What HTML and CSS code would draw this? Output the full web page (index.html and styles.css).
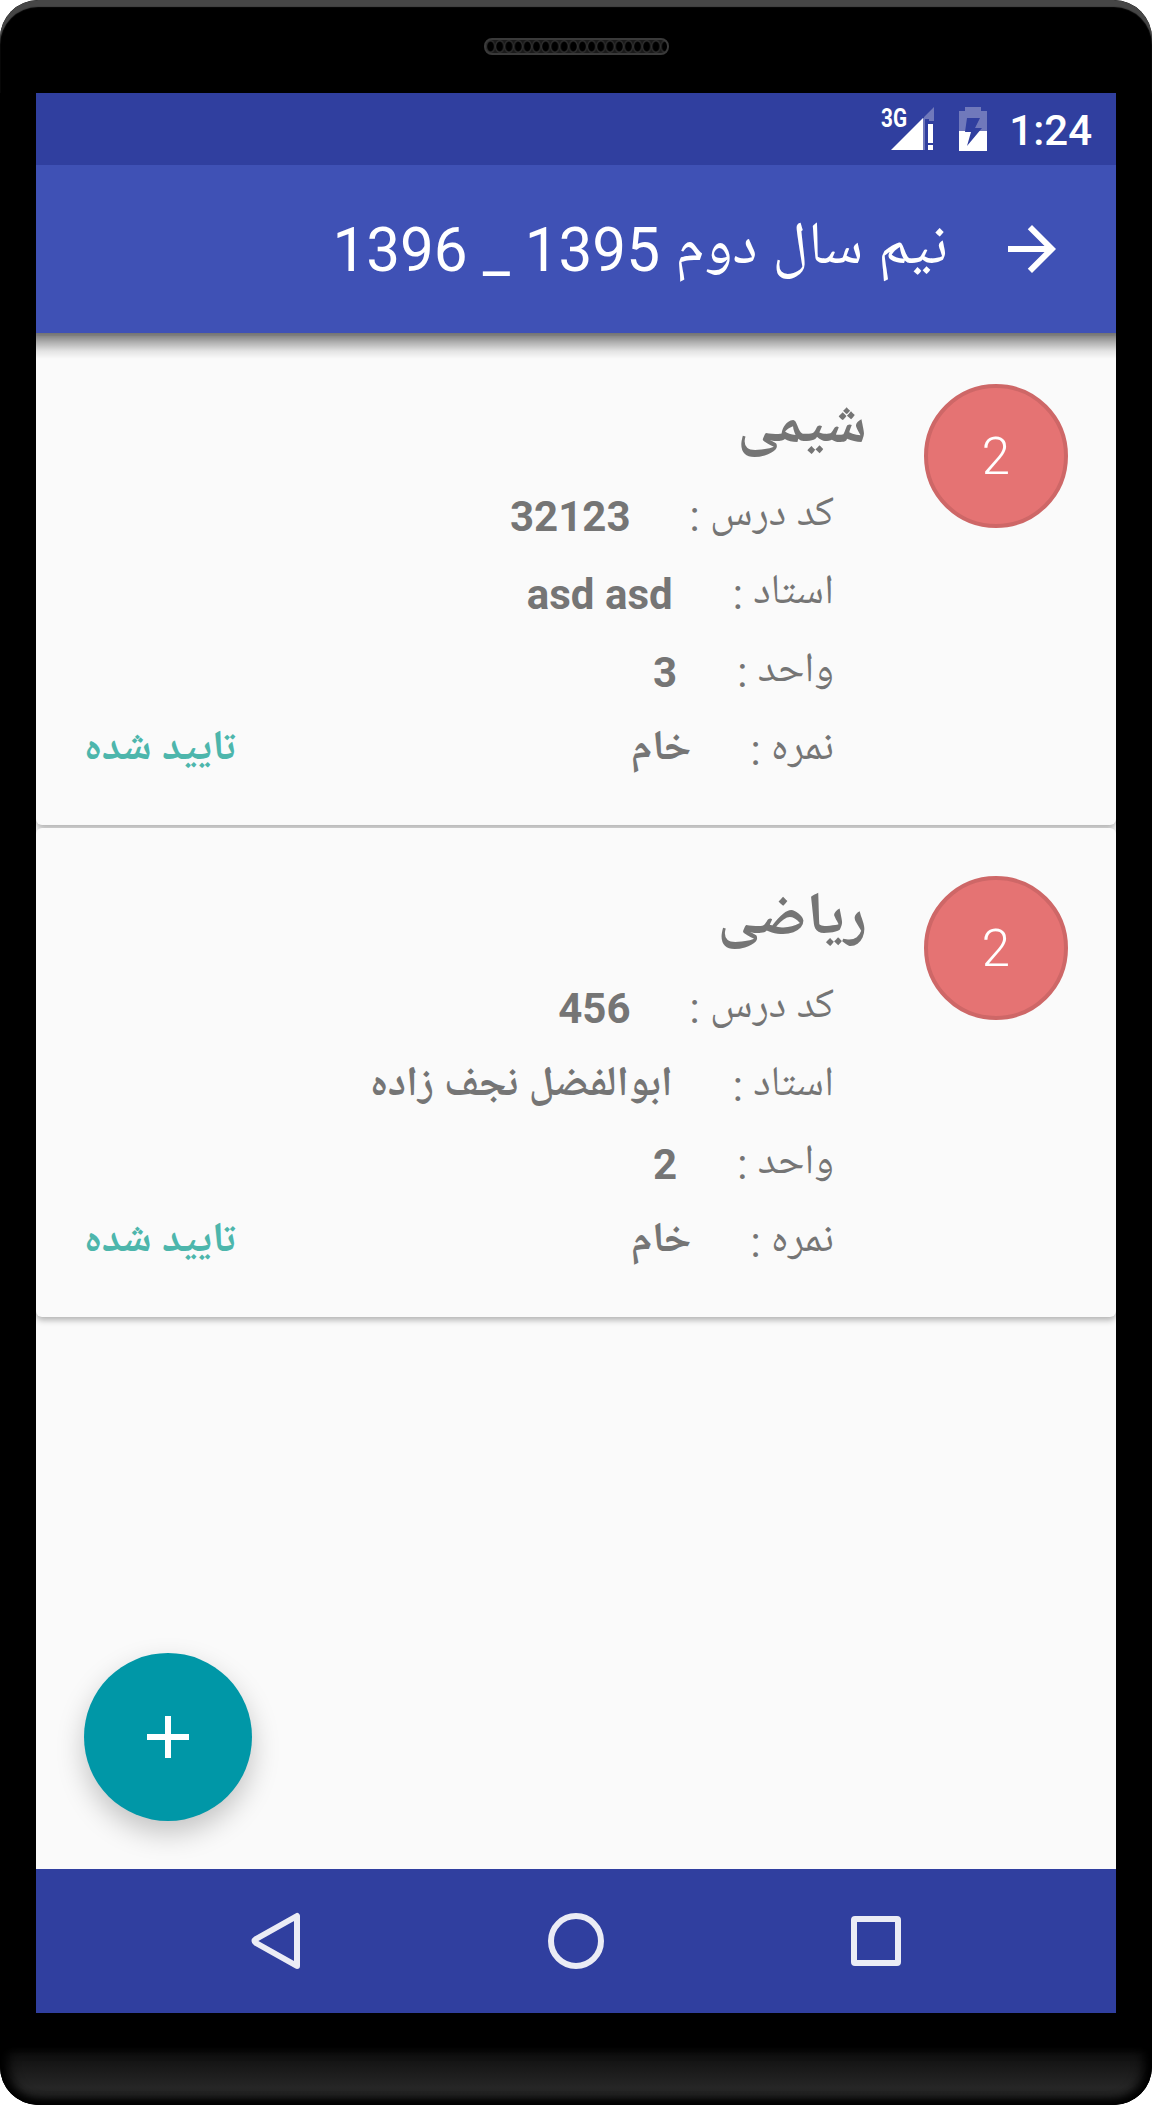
FILE: index.html
```html
<!DOCTYPE html>
<html lang="fa" dir="rtl">
<head>
    <meta charset="UTF-8">
    <meta name="viewport" content="width=device-width, initial-scale=1.0">
    <title>نیم سال دوم 1395 _ 1396</title>
    <link rel="stylesheet" href="styles.css">
</head>
<body>
    <div class="phone">
        <div class="bezel-top">
            <div class="speaker"></div>
        </div>

        <div class="screen">
            <div class="status-bar" dir="ltr">
                <svg class="signal" width="56" height="46" viewBox="0 0 56 46">
                    <path d="M54 1v14h-5v-2h-5v-2z" fill="#7079bb"/>
                    <path d="M43 12h2v32h-2z" fill="#7079bb"/>
                    <path d="M11 44L43 12v32z" fill="#fff"/>
                    <path d="M48 18h5v19h-5zM48 39h5v5h-5z" fill="#fff"/>
                    <text x="1" y="21" textLength="26" lengthAdjust="spacingAndGlyphs">3G</text>
                </svg>
                <svg class="battery" width="30" height="44" viewBox="0 0 30 44">
                    <path d="M7 0h16v4h6v20H1V4h6z" fill="#7079bb"/>
                    <path d="M1 24h28v20H1z" fill="#fff"/>
                    <path d="M9 11h13l-5 10h7L9 39l4-14H7z" fill="#303f9f"/>
                </svg>
                <span class="time">1:24</span>
            </div>

            <div class="toolbar">
                <svg class="back" width="72" height="72" viewBox="0 0 24 24">
                    <path d="M12 4l-1.41 1.41L16.17 11H4v2h12.17l-5.58 5.59L12 20l8-8z" fill="#fff"/>
                </svg>
                <h1><span class="fa">نیم سال دوم</span> 1395 _ 1396</h1>
            </div>

            <div class="content">
                <div class="card">
                    <div class="badge">2</div>
                    <div class="info">
                        <h2><span class="fa">شیمی</span></h2>
                        <div class="row code">
                            <span class="label"><span class="fa">کد درس</span> :</span>
                            <span class="value">32123</span>
                        </div>
                        <div class="row teacher">
                            <span class="label"><span class="fa">استاد</span> :</span>
                            <span class="value">asd asd</span>
                        </div>
                        <div class="row unit">
                            <span class="label"><span class="fa">واحد</span> :</span>
                            <span class="value">3</span>
                        </div>
                        <div class="row grade">
                            <span class="label"><span class="fa">نمره</span> :</span>
                            <span class="value"><span class="fa">خام</span></span>
                            <span class="state"><span class="fa">تایید شده</span></span>
                        </div>
                    </div>
                </div>

                <div class="card">
                    <div class="badge">2</div>
                    <div class="info">
                        <h2><span class="fa">ریاضی</span></h2>
                        <div class="row code">
                            <span class="label"><span class="fa">کد درس</span> :</span>
                            <span class="value">456</span>
                        </div>
                        <div class="row teacher">
                            <span class="label"><span class="fa">استاد</span> :</span>
                            <span class="value"><span class="fa">ابوالفضل نجف زاده</span></span>
                        </div>
                        <div class="row unit">
                            <span class="label"><span class="fa">واحد</span> :</span>
                            <span class="value">2</span>
                        </div>
                        <div class="row grade">
                            <span class="label"><span class="fa">نمره</span> :</span>
                            <span class="value"><span class="fa">خام</span></span>
                            <span class="state"><span class="fa">تایید شده</span></span>
                        </div>
                    </div>
                </div>

                <div class="fab">
                    <svg width="42" height="42" viewBox="0 0 42 42">
                        <path d="M18 0h6v18h18v6H24v18h-6V24H0v-6h18z" fill="#fff"/>
                    </svg>
                </div>
            </div>

            <div class="nav-bar" dir="ltr">
                <svg width="60" height="60" viewBox="0 0 60 60">
                    <path d="M51 5v50L10 32q-3-2 0-4z"/>
                </svg>
                <svg width="60" height="60" viewBox="0 0 60 60">
                    <circle cx="30" cy="30" r="25"/>
                </svg>
                <svg width="60" height="60" viewBox="0 0 60 60">
                    <rect x="8" y="8" width="44" height="44" rx="1"/>
                </svg>
            </div>
        </div>

        <div class="bezel-bottom"></div>
    </div>
</body>
</html>
```
FILE: styles.css
```css
* {
    margin: 0;
    padding: 0;
    box-sizing: border-box;
}

body {
    background: #fff;
    font-family: Roboto, "Noto Naskh Arabic UI", "Noto Naskh Arabic", "DejaVu Sans", sans-serif;
}

.phone {
    width: 1152px;
    height: 2105px;
    display: flex;
    flex-direction: column;
    align-items: center;
    background: #000;
    border-radius: 38px;
    overflow: hidden;
}

.bezel-top {
    width: 100%;
    height: 93px;
    padding-top: 38px;
    border-radius: 38px 38px 0 0;
    box-shadow: inset 0 7px 1px #464646;
}

.speaker {
    width: 185px;
    height: 17px;
    margin: 0 auto;
    border: 2px solid #3a3a3a;
    border-radius: 8px;
    background: radial-gradient(ellipse at center, #000 3px, #333 4px, #1a1a1a 5px) 0 0 / 9.2px 13px;
}

.screen {
    width: 1080px;
    height: 1920px;
    display: flex;
    flex-direction: column;
    background: #fafafa;
}

.status-bar {
    height: 72px;
    display: flex;
    align-items: center;
    justify-content: flex-end;
    padding-right: 24px;
    background: #303f9f;
}

.signal {
    margin-right: 22px;
    overflow: visible;
}

.signal text {
    font-family: Roboto, sans-serif;
    font-size: 26px;
    font-weight: 700;
    fill: #fff;
}

.battery {
    margin-right: 21px;
}

.time {
    padding-top: 3px;
    font-size: 42px;
    font-weight: 500;
    line-height: 72px;
    color: #fff;
}

.toolbar {
    position: relative;
    z-index: 1;
    height: 168px;
    display: flex;
    align-items: center;
    padding-right: 48px;
    background: #3f51b5;
}

/* shadow under the toolbar */
.toolbar::after {
    content: "";
    position: absolute;
    top: 100%;
    left: 0;
    right: 0;
    height: 26px;
    background: linear-gradient(rgba(0, 0, 0, 0.54), rgba(0, 0, 0, 0.3) 35%, rgba(0, 0, 0, 0.09) 70%, transparent);
}

.toolbar h1 {
    padding-top: 4px;
    margin-right: 48px;
    font-size: 60.2px;
    font-weight: 400;
    line-height: 72px;
    color: #fff;
}

.content {
    position: relative;
    flex: 1;
    padding-top: 3px;
}

.card {
    height: 489px;
    display: flex;
    padding: 48px 48px 0;
    margin-bottom: 3px;
    border-radius: 6px;
    background: #fafafa;
    box-shadow: 0 3px 6px rgba(0, 0, 0, 0.3);
}

.card:first-child {
    border-radius: 0 0 6px 6px;
}

.badge {
    width: 144px;
    height: 144px;
    border: 4px solid #ce6767;
    border-radius: 50%;
    background: #e57373;
    color: #fff;
    font-size: 51px;
    font-weight: 300;
    line-height: 138px;
    text-align: center;
}

.info {
    flex: 1;
    padding-right: 57px;
    color: #757575;
}

.info h2 {
    height: 94px;
    font-size: 60px;
    line-height: 91px;
}

.row {
    height: 78px;
    display: flex;
    align-items: center;
    padding-right: 33px;
    font-size: 42px;
    line-height: 78px;
    white-space: nowrap;
}

.value {
    margin-right: 60px;
    font-weight: 700;
}

.code .value,
.grade .value {
    margin-right: 59px;
}

.state {
    margin-right: auto;
    font-weight: 700;
    color: #4db6ac;
}

.fab {
    position: absolute;
    left: 48px;
    bottom: 48px;
    width: 168px;
    height: 168px;
    display: flex;
    align-items: center;
    justify-content: center;
    border-radius: 50%;
    background: #0097a7;
    box-shadow: 0 12px 28px rgba(0, 0, 0, 0.22);
}

.nav-bar {
    height: 144px;
    display: flex;
    align-items: center;
    justify-content: space-between;
    padding: 0 210px;
    background: #303f9f;
}

.nav-bar svg {
    fill: none;
    stroke: #ebecf5;
    stroke-width: 6;
    stroke-linejoin: round;
}

.bezel-bottom {
    width: 100%;
    height: 58px;
    margin-top: auto;
    border-radius: 0 0 38px 38px;
    background: linear-gradient(#0b0b0b, #262626 70%, #1c1c1c);
    box-shadow: inset 0 -4px 8px #000, inset 8px 0 12px #000, inset -8px 0 12px #000;
}
```
